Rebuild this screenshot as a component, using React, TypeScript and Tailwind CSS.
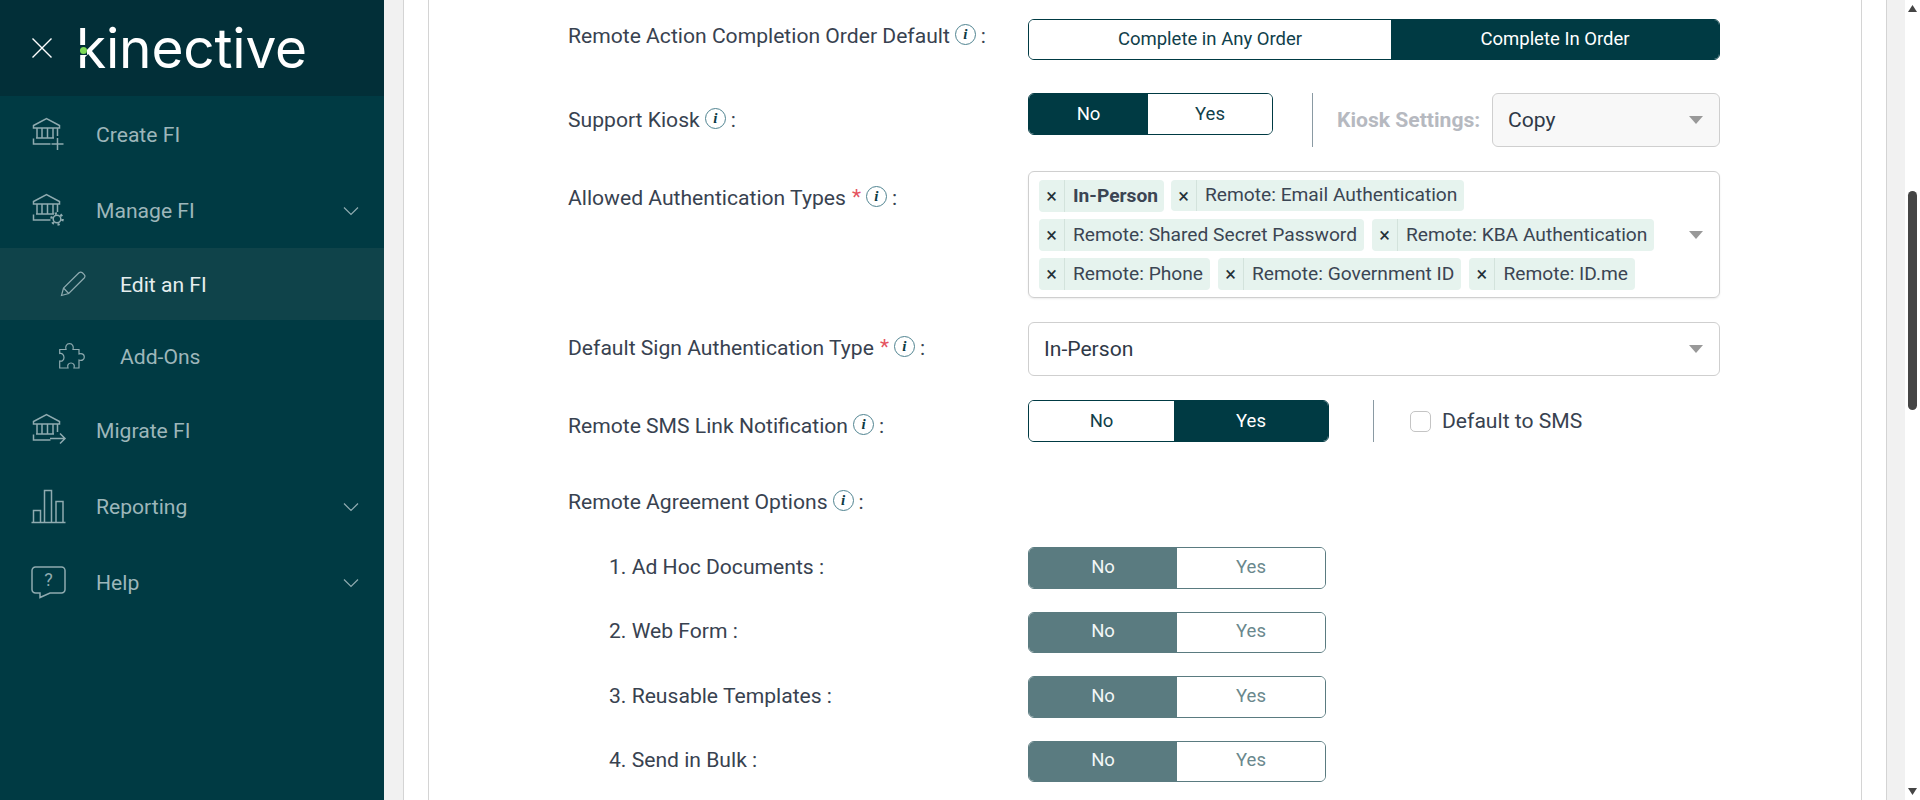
import React from 'react';

const ICON = '#8fabb0';

function Bank() {
  return (
    <g>
      <path d="M2.5 9.5 15.5 2.5l13 7v2.5h-26z" />
      <path d="M6 12v10M11 12v10M16.5 12v10M22 12v10M26.5 12v8" />
      <path d="M5 22h18M2.5 22.5v5.5h17" />
    </g>
  );
}

function NavIcon({ children }: { children: React.ReactNode }) {
  return (
    <svg width="36" height="36" viewBox="0 0 36 36" fill="none" stroke={ICON} strokeWidth="1.5" className="shrink-0">
      {children}
    </svg>
  );
}

function Chevron() {
  return (
    <svg width="16" height="10" viewBox="0 0 16 10" fill="none" stroke={ICON} strokeWidth="1.2" className="absolute left-[343px] top-[34px]">
      <path d="M1 1.5 8 8.5l7-7" />
    </svg>
  );
}

function NavItem(props: { icon: React.ReactNode; label: string; chevron?: boolean }) {
  return (
    <div className="relative flex items-center h-[76px] pl-[31px] gap-[29px] text-[21.12px] text-[#9db6ba]">
      {props.icon}
      <span className="mt-[2px]">{props.label}</span>
      {props.chevron && <Chevron />}
    </div>
  );
}

function Sidebar() {
  return (
    <aside className="w-[384px] shrink-0 bg-[#003a43] h-full">
      <div className="relative h-[96px] bg-[#022f38] flex items-center pl-[32px]">
        <svg width="20" height="20" viewBox="0 0 20 20" stroke="#ffffff" strokeWidth="1.4" className="shrink-0">
          <path d="M0.5 0.5 19.5 19.5M19.5 0.5 0.5 19.5" />
        </svg>
        <span className="ml-[24px] font-['Inter',sans-serif] font-normal text-[55px] leading-none text-white tracking-[-0.2px] mt-[1px]">kinective</span>
        <span className="absolute left-[79px] top-[45px] w-[8px] h-[10px] bg-[#022f38]" />
        <span className="absolute left-[80px] top-[47px] w-[7px] h-[7px] rounded-full bg-[#7ed957]" />
      </div>
      <NavItem
        label="Create FI"
        icon={
          <NavIcon>
            <Bank />
            <path d="M26.5 22v12M20.5 28h12" />
          </NavIcon>
        }
      />
      <NavItem
        label="Manage FI"
        chevron
        icon={
          <NavIcon>
            <Bank />
            <circle cx="26" cy="27" r="3.8" />
            <circle cx="26" cy="27" r="5.6" strokeWidth="2.4" strokeDasharray="2.2 3.66" />
          </NavIcon>
        }
      />
      <div className="flex items-center h-[72px] pl-[60px] gap-[34px] bg-[#0f434a] text-[21.12px] text-[#e6eeef]">
        <svg width="26" height="26" viewBox="0 0 26 26" fill="none" stroke={ICON} strokeWidth="1.2" className="shrink-0">
          <path d="M1.5 24.5 3.5 17 19 1.8c1-.9 2.4-.9 3.4 0l1.8 1.8c.9 1 .9 2.4 0 3.4L8.7 22.5zM3.5 17l5.2 5.5" />
        </svg>
        <span className="mt-[2px]">Edit an FI</span>
      </div>
      <div className="flex items-center h-[72px] pl-[59px] gap-[35px] text-[21.12px] text-[#9db6ba]">
        <svg width="26" height="26" viewBox="0 0 26 26" fill="none" stroke={ICON} strokeWidth="1.2" className="shrink-0">
          <path d="M.7 6.5H7C6 3.5 7.5.7 10.5.7s4.500 2.800 3.500 5.800h6V11c3-1 5.300.3 5.300 3s-2.300 4-5.300 3v8h-5c1-3-.5-5-3-5s-4 2-3 5H.7v-7c2.300.800 4.300-1 4.300-3.500S3 9.700.7 10.500z" />
        </svg>
        <span className="mt-[1px]">Add-Ons</span>
      </div>
      <NavItem
        label="Migrate FI"
        icon={
          <NavIcon>
            <Bank />
            <path d="M19 26.5h15M29 21.5l5 5-5 5" />
          </NavIcon>
        }
      />
      <NavItem
        label="Reporting"
        chevron
        icon={
          <NavIcon>
            <path d="M0.5 34.5h34M2.5 34V22.5h7V34M13.5 34V2.5h7V34M25 34V13.5h7V34" />
          </NavIcon>
        }
      />
      <NavItem
        label="Help"
        chevron
        icon={
          <NavIcon>
            <path d="M4.500 3h26a3.500 3.500 0 0 1 3.500 3.500v19a3.500 3.500 0 0 1-3.500 3.500H19l-10 4.500V29H4.500A3.500 3.500 0 0 1 1 25.500v-19A3.500 3.500 0 0 1 4.500 3z" />
            <text x="17.500" y="22" textAnchor="middle" fontFamily="Roboto, sans-serif" fontSize="18" fill={ICON} stroke="none">?</text>
          </NavIcon>
        }
      />
    </aside>
  );
}

function Info() {
  return (
    <span className="inline-flex items-center justify-center w-[21px] h-[21px] rounded-full border border-[#4f8390] bg-white ml-[5px] mr-[5px] -mt-[3px] font-['Liberation_Serif',serif] italic font-bold text-[15px] leading-none text-[#0d3a44] shrink-0">
      i
    </span>
  );
}

function Label(props: { text: string; required?: boolean; top: string }) {
  return (
    <div className={`w-[460px] shrink-0 flex items-center h-[27px] ${props.top}`}>
      <span>{props.text}</span>
      {props.required && <span className="text-[#e5545f] ml-[6px] text-[21px]">*</span>}
      <Info />
      <span>:</span>
    </div>
  );
}

function Toggle(props: {
  options: string[];
  active: number;
  widths: string[];
  height: string;
  muted?: boolean;
}) {
  const border = props.muted ? 'border-[#5a7b80]' : 'border-[#003a43]';
  const on = props.muted ? 'bg-[#5a7b80] text-[#f2f6f6]' : 'bg-[#003a43] text-white';
  const off = props.muted ? 'bg-white text-[#6a888d]' : 'bg-white text-[#10404a]';
  return (
    <div className={`flex shrink-0 rounded-[6px] overflow-hidden border ${border} ${props.height}`}>
      {props.options.map((o, i) => (
        <div key={o} className={`flex items-center justify-center text-[18.5px] ${props.muted ? '' : 'pt-[1px]'} ${props.widths[i]} ${i === props.active ? on : off}`}>
          {o}
        </div>
      ))}
    </div>
  );
}

function Arrow() {
  return (
    <svg width="14" height="8" viewBox="0 0 14 8" className="absolute right-[16px] top-1/2 -translate-y-1/2">
      <path d="M0 0h14L7 8z" fill="#999999" />
    </svg>
  );
}

function Chip({ text, bold, short }: { text: string; bold?: boolean; short?: boolean }) {
  return (
    <div className={`flex items-stretch rounded-[4px] bg-[#e6f3ee] text-[19.2px] text-[#3b4553] ${short ? 'h-[31px]' : 'h-[32px]'}`}>
      <span className="w-[26px] border-r border-[#d3e3dc] flex items-center justify-center text-[#243038] text-[20px]">×</span>
      <span className={`pl-[8px] flex items-center ${bold ? 'font-bold pr-[6px]' : 'pr-[7px]'}`}>{text}</span>
    </div>
  );
}

function SubRow({ label }: { label: string }) {
  return (
    <div className="flex items-center">
      <div className="w-[460px] pl-[41px] pb-[2px] shrink-0">{label}</div>
      <Toggle options={['No', 'Yes']} active={0} widths={['w-[148px]', 'w-[148px]']} height="h-[41.5px]" muted />
    </div>
  );
}

function Form() {
  return (
    <div className="pl-[139px] pt-[19px] text-[21.12px] text-[#384250]">
      <div className="flex h-[50px] items-start">
        <Label text="Remote Action Completion Order Default" top="mt-[3px]" />
        <Toggle
          options={['Complete in Any Order', 'Complete In Order']}
          active={1}
          widths={['w-[362px]', 'w-[328px]']}
          height="h-[41px]"
        />
      </div>
      <div className="flex items-start mt-[24px] h-[54px]">
        <Label text="Support Kiosk" top="mt-[13px]" />
        <Toggle options={['No', 'Yes']} active={0} widths={['w-[119px]', 'w-[124px]']} height="h-[42px]" />
        <div className="w-px h-[54px] bg-[#8a9aa3] ml-[39px]" />
        <span className="ml-[24px] w-[143px] whitespace-nowrap font-bold text-[#b6b9c0] self-center">Kiosk Settings:</span>
        <div className="relative ml-[12px] w-[228px] h-[54px] rounded-[6px] border border-[#cfcfcf] bg-[#f8f8f8] flex items-center pl-[15px] text-[#2f3947]">
          Copy
          <Arrow />
        </div>
      </div>
      <div className="flex items-start mt-[24px]">
        <Label text="Allowed Authentication Types" required top="mt-[13px]" />
        <div className="relative w-[692px] h-[127px] rounded-[6px] border border-[#cfcfcf] shadow-[0_1px_2px_rgba(0,0,0,0.08)] pl-[10px] pt-[8px] flex flex-col gap-[7px]">
          <div className="flex gap-[7px]">
            <Chip text="In-Person" bold />
            <Chip text="Remote: Email Authentication" short />
          </div>
          <div className="flex gap-[8px]">
            <Chip text="Remote: Shared Secret Password" />
            <Chip text="Remote: KBA Authentication" />
          </div>
          <div className="flex gap-[8px]">
            <Chip text="Remote: Phone" />
            <Chip text="Remote: Government ID" />
            <Chip text="Remote: ID.me" />
          </div>
          <Arrow />
        </div>
      </div>
      <div className="flex items-start mt-[24px]">
        <Label text="Default Sign Authentication Type" required top="mt-[12px]" />
        <div className="relative w-[692px] h-[54px] rounded-[6px] border border-[#cfcfcf] flex items-center pl-[15px] text-[#2f3947]">
          In-Person
          <Arrow />
        </div>
      </div>
      <div className="flex items-start mt-[24px] h-[42px]">
        <Label text="Remote SMS Link Notification" top="mt-[12px]" />
        <Toggle options={['No', 'Yes']} active={1} widths={['w-[145px]', 'w-[154px]']} height="h-[42px]" />
        <div className="w-px h-[42px] bg-[#8a9aa3] ml-[44px]" />
        <span className="ml-[36px] mt-[11px] w-[21px] h-[21px] rounded-[5px] border border-[#c4c4c4] bg-white" />
        <span className="ml-[11px] mt-[7px] leading-[27px]">Default to SMS</span>
      </div>
      <div className="flex mt-[46px]">
        <Label text="Remote Agreement Options" top="" />
      </div>
      <div className="flex flex-col gap-[23px] mt-[32px]">
        <SubRow label="1. Ad Hoc Documents :" />
        <SubRow label="2. Web Form :" />
        <SubRow label="3. Reusable Templates :" />
        <SubRow label="4. Send in Bulk :" />
      </div>
    </div>
  );
}

export default function App() {
  return (
    <div className="flex w-[1920px] h-[800px] overflow-hidden font-['Roboto',sans-serif] bg-white">
      <Sidebar />
      <main className="flex-1 flex bg-[#f1f1f1] pl-[19px] pr-[18px]">
        <div className="flex-1 bg-white border-x border-[#d4d4d4] px-[24px]">
          <div className="h-full bg-white border-x border-[#d4d4d4]">
            <Form />
          </div>
        </div>
      </main>
      <div className="w-[15px] shrink-0 bg-white flex flex-col items-center pt-[5px]">
        <svg width="9" height="7" viewBox="0 0 9 7" className="shrink-0"><path d="M4.500 0 9 7H0z" fill="#454545" /></svg>
        <div className="w-[9px] h-[219px] rounded-full bg-[#454545] mt-[179px]" />
        <svg width="9" height="7" viewBox="0 0 9 7" className="shrink-0 mt-[378px]"><path d="M4.500 7 9 0H0z" fill="#454545" /></svg>
      </div>
    </div>
  );
}
